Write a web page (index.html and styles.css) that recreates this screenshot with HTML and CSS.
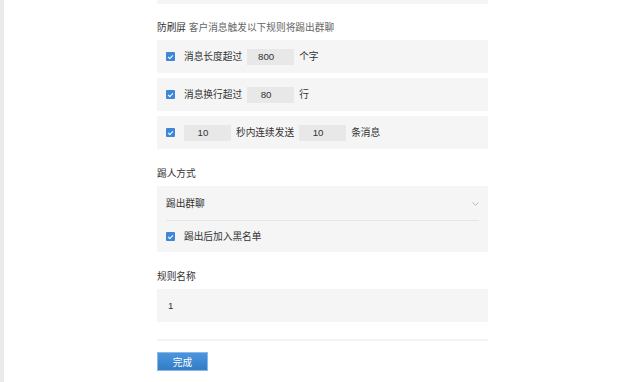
FILE: index.html
```html
<!DOCTYPE html>
<html lang="zh-CN">
<head>
  <meta charset="UTF-8" />
  <meta name="viewport" content="width=device-width, initial-scale=1.0">
  <title>防刷屏规则</title>
  <link rel="stylesheet" href="styles.css">
</head>
<body>
  <div class="page">
    <!-- 左侧边 -->
    <div class="side-strip"></div>

    <div class="main">
      <div class="form">
        <div class="top-box"></div>

        <!-- 防刷屏 -->
        <div class="section-title">防刷屏 <span class="sub">客户消息触发以下规则将踢出群聊</span></div>
        <div class="rule-row">
          <span class="check"></span>
          <span class="label">消息长度超过</span>
          <span class="num-box">800</span>
          <span class="label">个字</span>
        </div>
        <div class="rule-row">
          <span class="check"></span>
          <span class="label">消息换行超过</span>
          <span class="num-box">80</span>
          <span class="label">行</span>
        </div>
        <div class="rule-row">
          <span class="check"></span>
          <span class="num-box">10</span>
          <span class="label">秒内连续发送</span>
          <span class="num-box">10</span>
          <span class="label">条消息</span>
        </div>

        <!-- 踢人方式 -->
        <div class="section-title gap">踢人方式</div>
        <div class="panel">
          <div class="select-row">
            <span class="label">踢出群聊</span>
            <svg class="chevron" width="7" height="4" viewBox="0 0 7 4"><path d="M0.5 0.5 L3.5 3.2 L6.5 0.5" fill="none" stroke="#bbb" stroke-width="1"/></svg>
          </div>
          <div class="check-row">
            <span class="check"></span>
            <span class="label">踢出后加入黑名单</span>
          </div>
        </div>

        <!-- 规则名称 -->
        <div class="section-title gap">规则名称</div>
        <div class="text-input">1</div>

        <div class="divider"></div>
        <button class="btn-done">完成</button>
      </div>
    </div>
  </div>
</body>
</html>
```

FILE: styles.css
```css
/* 基础 */
body {
  margin: 0;
  padding: 0;
  background-color: #fff;
  color: #333;
  font-family: "Liberation Sans", "Noto Sans CJK SC", sans-serif;
  font-size: 9.7px;
}

.page {
  display: flex;
  height: 100vh;
  overflow: hidden;
}

.side-strip {
  width: 4px;
  background-color: #e9eaec;
}

.main {
  flex: 1;
  padding-left: 153px;
}

.form {
  width: 331px;
}

.top-box {
  height: 4px;
  background-color: #f5f5f5;
}

/* 标题 */
.section-title {
  margin-top: 17px;
  margin-bottom: 5px;
  line-height: 14px;
  color: #333;
}

.section-title.gap {
  margin-top: 18px;
}

.section-title .sub {
  color: #666;
}

/* 规则行 */
.rule-row {
  display: flex;
  align-items: center;
  height: 33px;
  margin-bottom: 5px;
  padding-left: 9px;
  background-color: #f5f5f5;
  gap: 5px;
}

.check {
  position: relative;
  width: 9px;
  height: 9px;
  margin-right: 4px;
  border-radius: 1px;
  background-color: #3d86d8;
  flex-shrink: 0;
}

.check::after {
  content: "";
  position: absolute;
  left: 2px;
  top: 3px;
  width: 4px;
  height: 2px;
  border-left: 1.3px solid #fff;
  border-bottom: 1.3px solid #fff;
  transform: rotate(-45deg);
}

.label {
  line-height: 14px;
}

.num-box {
  width: 38px;
  height: 16px;
  padding-right: 9px;
  line-height: 16px;
  text-align: center;
  background-color: #e8e8e8;
}

/* 踢人方式 */
.panel {
  background-color: #f5f5f5;
  padding: 0 9px;
}

.select-row {
  display: flex;
  align-items: center;
  justify-content: space-between;
  height: 35px;
  padding-top: 1px;
  box-sizing: border-box;
  border-bottom: 1px solid #e6e6e6;
}

.check-row {
  display: flex;
  align-items: center;
  height: 31px;
  gap: 5px;
}

/* 规则名称 */
.text-input {
  height: 33px;
  line-height: 33px;
  padding-left: 11px;
  background-color: #f5f5f5;
}

.divider {
  height: 2px;
  margin-top: 17px;
  background-color: #f3f3f3;
}

.btn-done {
  display: block;
  width: 51px;
  height: 19px;
  margin-top: 11px;
  padding: 0;
  border: 1px solid #8bb8e6;
  background: linear-gradient(#4a96de, #337cc6);
  color: #fff;
  font-family: inherit;
  font-size: 9.7px;
  cursor: pointer;
}
```
